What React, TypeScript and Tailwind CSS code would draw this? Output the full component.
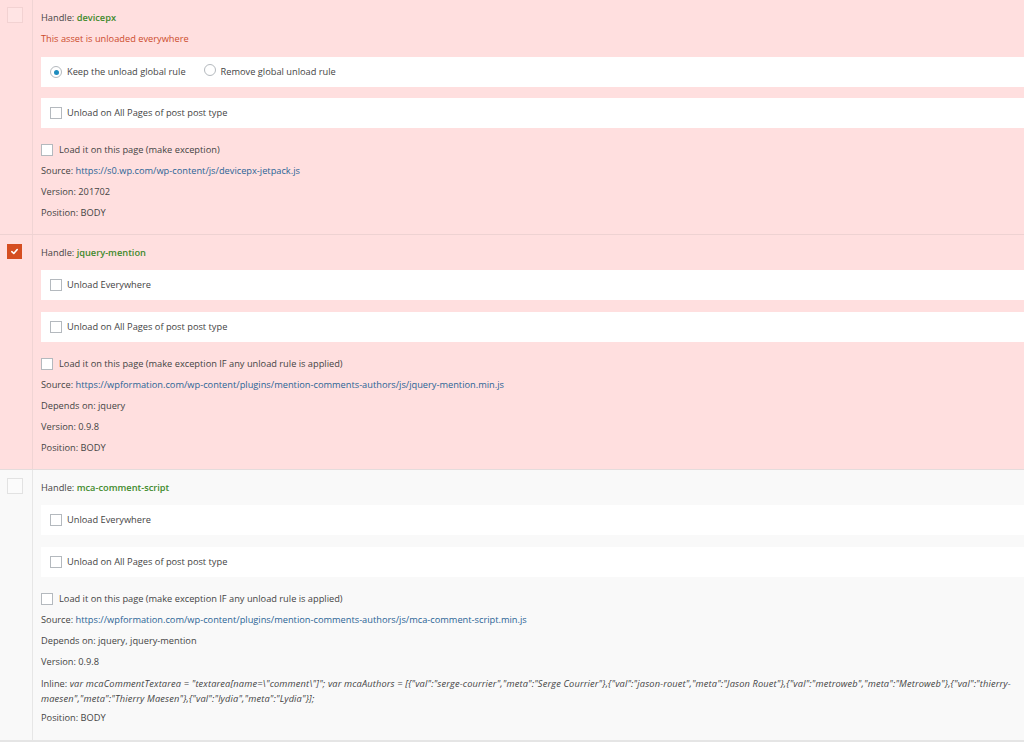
import React from "react";

const Check = ({ className = "" }: { className?: string }) => (
  <span className={`inline-block w-[12px] h-[12px] border border-[#b4b9be] bg-white shrink-0 ${className}`} />
);

const Radio = ({ checked }: { checked?: boolean }) => (
  <span className="inline-flex items-center justify-center w-[12px] h-[12px] rounded-full border border-[#b4b9be] bg-white shrink-0">
    {checked && <span className="w-[5px] h-[5px] rounded-full bg-[#1e8cbe]" />}
  </span>
);

const Box = ({ children, className = "" }: { children: React.ReactNode; className?: string }) => (
  <div className={`h-[30px] bg-white flex items-center pl-[9px] gap-[5px] ${className}`}>{children}</div>
);

const Line = ({ children, className = "" }: { children: React.ReactNode; className?: string }) => (
  <div className={`h-[21px] flex items-center whitespace-nowrap ${className}`}>{children}</div>
);

const Handle = ({ name }: { name: string }) => (
  <Line>
    Handle:&nbsp;<span className="text-[#3f8a2c] font-semibold">{name}</span>
  </Line>
);

const Link = ({ href }: { href: string }) => <span className="text-[#2a6496]">{href}</span>;

export default function App() {
  return (
    <div
      className="w-[1024px] h-[742px] overflow-hidden bg-white text-[#444] text-[9.25px]"
      style={{ fontFamily: '"Open Sans", "Noto Sans", sans-serif' }}
    >
      {/* Row 1 */}
      <div className="flex bg-[#ffdfdf] border-b border-[#eed2d2]">
        <div className="w-[33px] shrink-0 border-r border-[#f0d4d4] pt-[7px] pl-[7px]">
          <span className="block w-[16px] h-[16px] border border-[#f2d2d2] bg-[#ffe4e4]" />
        </div>
        <div className="flex-1 pl-[8px] pt-[7px] pb-[11px]">
          <Handle name="devicepx" />
          <Line className="text-[#cc4b2c]">This asset is unloaded everywhere</Line>
          <Box className="mt-[8px]">
            <Radio checked />
            <span>Keep the unload global rule</span>
            <span className="ml-[13px]">
              <Radio />
            </span>
            <span>Remove global unload rule</span>
          </Box>
          <Box className="mt-[11px]">
            <Check />
            <span>Unload on All Pages of post post type</span>
          </Box>
          <Line className="mt-[11px] gap-[6px]">
            <Check />
            <span>Load it on this page (make exception)</span>
          </Line>
          <Line>
            Source:&nbsp;<Link href="https://s0.wp.com/wp-content/js/devicepx-jetpack.js" />
          </Line>
          <Line>Version: 201702</Line>
          <Line>Position: BODY</Line>
        </div>
      </div>

      {/* Row 2 */}
      <div className="flex bg-[#ffdfdf] border-b border-[#e4dcdc]">
        <div className="w-[33px] shrink-0 border-r border-[#f0d4d4] pt-[9px] pl-[7px]">
          <span className="flex items-center justify-center w-[15px] h-[15px] bg-[#d54e21]">
            <svg width="9" height="9" viewBox="0 0 10 10">
              <path d="M2 5.2 L4.2 7.2 L8 2.8" fill="none" stroke="white" strokeWidth="1.8" strokeLinecap="round" strokeLinejoin="round" />
            </svg>
          </span>
        </div>
        <div className="flex-1 pl-[8px] pt-[7px] pb-[11px]">
          <Handle name="jquery-mention" />
          <Box className="mt-[7px]">
            <Check />
            <span>Unload Everywhere</span>
          </Box>
          <Box className="mt-[12px]">
            <Check />
            <span>Unload on All Pages of post post type</span>
          </Box>
          <Line className="mt-[11px] gap-[6px]">
            <Check />
            <span>Load it on this page (make exception IF any unload rule is applied)</span>
          </Line>
          <Line>
            Source:&nbsp;
            <Link href="https://wpformation.com/wp-content/plugins/mention-comments-authors/js/jquery-mention.min.js" />
          </Line>
          <Line>Depends on: jquery</Line>
          <Line>Version: 0.9.8</Line>
          <Line>Position: BODY</Line>
        </div>
      </div>

      {/* Row 3 */}
      <div className="flex bg-[#f9f9f9] border-b-2 border-[#e5e5e5]">
        <div className="w-[33px] shrink-0 border-r border-[#e6e6e6] pt-[8px] pl-[7px]">
          <span className="block w-[16px] h-[16px] border border-[#e2e2e2] bg-[#fbfbfb]" />
        </div>
        <div className="flex-1 pl-[8px] pt-[7px] pb-[12px]">
          <Handle name="mca-comment-script" />
          <Box className="mt-[7px]">
            <Check />
            <span>Unload Everywhere</span>
          </Box>
          <Box className="mt-[12px]">
            <Check />
            <span>Unload on All Pages of post post type</span>
          </Box>
          <Line className="mt-[11px] gap-[6px]">
            <Check />
            <span>Load it on this page (make exception IF any unload rule is applied)</span>
          </Line>
          <Line>
            Source:&nbsp;
            <Link href="https://wpformation.com/wp-content/plugins/mention-comments-authors/js/mca-comment-script.min.js" />
          </Line>
          <Line>Depends on: jquery, jquery-mention</Line>
          <Line>Version: 0.9.8</Line>
          <div className="mt-[4px] leading-[15px] whitespace-nowrap">
            Inline:{" "}
            <em className="tracking-[0.15px]">
              {'var mcaCommentTextarea = "textarea[name=\\"comment\\"]"; var mcaAuthors = [{"val":"serge-courrier","meta":"Serge Courrier"},{"val":"jason-rouet","meta":"Jason Rouet"},{"val":"metroweb","meta":"Metroweb"},{"val":"thierry-'}
              <br />
              {'maesen","meta":"Thierry Maesen"},{"val":"lydia","meta":"Lydia"}];'}
            </em>
          </div>
          <Line className="mt-[1px]">Position: BODY</Line>
        </div>
      </div>
    </div>
  );
}
